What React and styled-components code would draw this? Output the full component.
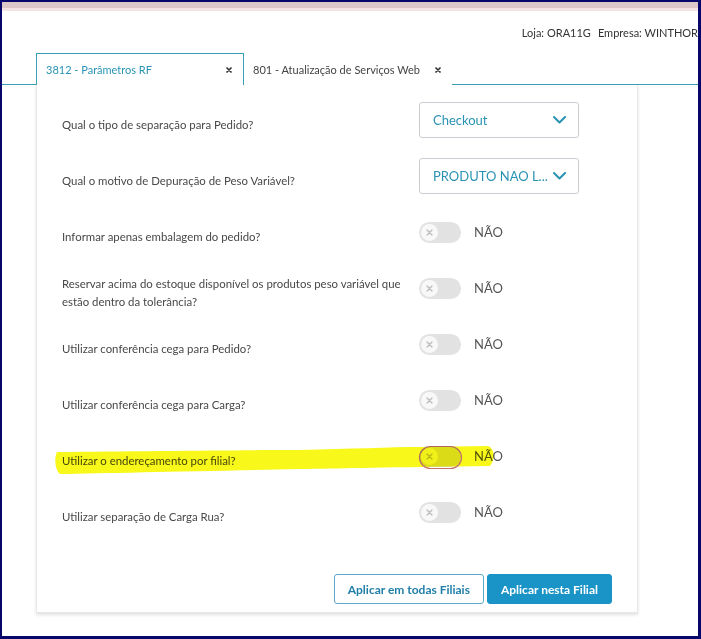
import React from "react";
import styled, { createGlobalStyle } from "styled-components";

const GlobalStyle = createGlobalStyle`
  html, body {
    margin: 0;
    padding: 0;
    background: #06066b;
  }
  body {
    font-family: "Lato", "Open Sans", sans-serif;
  }
`;

const teal = "#2a93b4";

const Frame = styled.div`
  box-sizing: border-box;
  height: 100vh;
  border-style: solid;
  border-color: #06066b;
  border-width: 2px 3px 3px 2px;
`;

const Screen = styled.div`
  height: 100%;
  background: #fff;
  display: flex;
  flex-direction: column;
  overflow: hidden;
`;

const TopStrip = styled.div`
  height: 6px;
  background: #dcc8c8;
  border-bottom: 3px solid #f4e4e4;
  flex-shrink: 0;
`;

const Header = styled.div`
  height: 42px;
  display: flex;
  align-items: center;
  justify-content: flex-end;
  font-size: 11px;
  color: #333;
  white-space: nowrap;
  flex-shrink: 0;
  span + span {
    margin-left: 7px;
  }
`;

const TabBar = styled.div`
  height: 31px;
  display: flex;
  align-items: stretch;
  padding-left: 34px;
  border-bottom: 1px solid #3b9db3;
  flex-shrink: 0;
`;

const Tab = styled.div`
  box-sizing: border-box;
  width: ${(p) => p.$width}px;
  height: 32px;
  margin-bottom: -1px;
  padding: 0 ${(p) => (p.$active ? 11 : 10)}px 0 ${(p) => (p.$active ? 9 : 8)}px;
  display: flex;
  align-items: center;
  justify-content: space-between;
  font-size: 11px;
  color: ${(p) => (p.$active ? teal : "#444")};
  background: #fff;
  border: 1px solid ${(p) => (p.$active ? "#3b9db3" : "transparent")};
  border-bottom: none;
`;

const CloseIcon = () => (
  <svg width="6" height="6" viewBox="0 0 6 6">
    <path d="M1 1 L5 5 M5 1 L1 5" stroke="#333" strokeWidth="1.7" strokeLinecap="round" />
  </svg>
);

const Card = styled.div`
  box-sizing: border-box;
  width: 602px;
  height: 528px;
  margin-left: 34px;
  padding-top: 7px;
  background: #fff;
  border: 1px solid #e8e8e8;
  border-top: none;
  box-shadow: 0 2px 3px rgba(0, 0, 0, 0.12);
  display: flex;
  flex-direction: column;
`;

const Row = styled.div`
  position: relative;
  height: 56px;
  display: grid;
  grid-template-columns: 357px 1fr;
  align-items: center;
  padding-left: 25px;
`;

const Label = styled.div`
  max-width: 346px;
  padding-top: 10px;
  font-size: 11.4px;
  line-height: 18px;
  color: #484848;
  position: relative;
  z-index: 1;
`;

const Select = styled.div`
  box-sizing: border-box;
  width: 160px;
  height: 36px;
  border: 1px solid #c9cdd2;
  border-radius: 3px;
  padding: 0 12px 0 13px;
  display: flex;
  align-items: center;
  justify-content: space-between;
  font-size: 13px;
  color: ${teal};
`;

const Chevron = () => (
  <svg width="13" height="8" viewBox="0 0 13 8">
    <path d="M1 1 L6.5 6.5 L12 1" fill="none" stroke={teal} strokeWidth="2" strokeLinecap="round" strokeLinejoin="round" />
  </svg>
);

const SwitchWrap = styled.div`
  display: flex;
  align-items: center;
  gap: 13px;
  font-size: 13px;
  color: #555;
  position: relative;
  z-index: 1;
`;

const Track = styled.div`
  box-sizing: border-box;
  width: 42px;
  height: 21px;
  border-radius: 11px;
  background: #e2e2e2;
  padding: 2px;
  display: flex;
  align-items: center;
`;

const Knob = styled.div`
  width: 17px;
  height: 17px;
  border-radius: 50%;
  background: #f8f8f8;
  display: flex;
  align-items: center;
  justify-content: center;
`;

const Switch = () => (
  <SwitchWrap>
    <Track>
      <Knob>
        <svg width="7" height="7" viewBox="0 0 7 7">
          <path d="M1 1 L6 6 M6 1 L1 6" stroke="#bcbcbc" strokeWidth="1.3" strokeLinecap="round" />
        </svg>
      </Knob>
    </Track>
    <span>NÃO</span>
  </SwitchWrap>
);

/* yellow marker stroke and red ring drawn over one row */
const Marker = styled.svg`
  position: absolute;
  left: 13px;
  top: 0;
  width: 460px;
  height: 56px;
  pointer-events: none;
  mix-blend-mode: multiply;
  z-index: 2;
`;

const Highlight = () => (
  <Marker viewBox="0 0 460 56">
    <path
      d="M7 24 C 90 23, 200 22, 250 22 C 300 21, 340 19, 370 19 L 438 18 C 444 20, 446 30, 440 38 L 370 39 C 300 40, 260 41, 250 41 C 150 43, 60 45, 10 46 C 5 42, 4 30, 7 24 Z"
      fill="#f8f81a"
    />
    <rect x="369.5" y="18.5" width="42" height="22" rx="11" fill="none" stroke="#c4726c" strokeWidth="1.2" />
  </Marker>
);

const Footer = styled.div`
  margin-top: auto;
  padding: 0 25px 8px 0;
  display: flex;
  justify-content: flex-end;
  gap: 3px;
`;

const Button = styled.button`
  box-sizing: border-box;
  height: 30px;
  padding: 0 13px;
  border-radius: 3px;
  border: 1px solid ${(p) => (p.$primary ? "#1a93c6" : "#5fa8c8")};
  background: ${(p) => (p.$primary ? "#1a93c6" : "#fff")};
  color: ${(p) => (p.$primary ? "#fff" : "#1f7ea8")};
  font-family: "Lato", sans-serif;
  font-size: 12px;
  font-weight: 700;
`;

const rows = [
  { label: "Qual o tipo de separação para Pedido?", select: "Checkout" },
  { label: "Qual o motivo de Depuração de Peso Variável?", select: "PRODUTO NAO L..." },
  { label: "Informar apenas embalagem do pedido?" },
  {
    label: "Reservar acima do estoque disponível os produtos peso variável que estão dentro da tolerância?",
  },
  { label: "Utilizar conferência cega para Pedido?" },
  { label: "Utilizar conferência cega para Carga?" },
  { label: "Utilizar o endereçamento por filial?", marked: true },
  { label: "Utilizar separação de Carga Rua?" },
];

export default function App() {
  return (
    <Frame>
      <GlobalStyle />
      <Screen>
        <TopStrip />
        <Header>
          <span>Loja: ORA11G</span>
          <span>Empresa: WINTHOR</span>
        </Header>
        <TabBar>
          <Tab $active $width={208}>
            <span>3812 - Parâmetros RF</span>
            <CloseIcon />
          </Tab>
          <Tab $width={208}>
            <span>801 - Atualização de Serviços Web</span>
            <CloseIcon />
          </Tab>
        </TabBar>
        <Card>
          {rows.map((row) => (
            <Row key={row.label}>
              <Label>{row.label}</Label>
              {row.select ? (
                <Select>
                  <span>{row.select}</span>
                  <Chevron />
                </Select>
              ) : (
                <Switch />
              )}
              {row.marked && <Highlight />}
            </Row>
          ))}
          <Footer>
            <Button>Aplicar em todas Filiais</Button>
            <Button $primary>Aplicar nesta Filial</Button>
          </Footer>
        </Card>
      </Screen>
    </Frame>
  );
}
